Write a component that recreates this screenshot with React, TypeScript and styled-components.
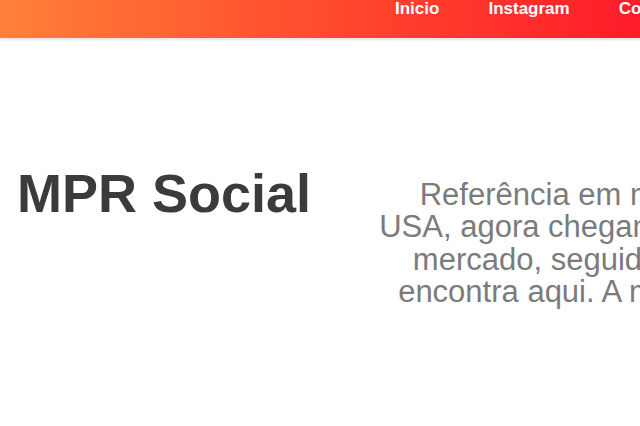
import React from "react";
import styled, { createGlobalStyle } from "styled-components";

const GlobalStyle = createGlobalStyle`
  html, body {
    margin: 0;
    padding: 0;
    overflow: hidden;
    background: #ffffff;
  }
  body {
    font-family: "Liberation Sans", Arial, Helvetica, sans-serif;
  }
`;

const Page = styled.div`
  width: 980px;
  min-height: 426px;
`;

const Header = styled.header`
  height: 38px;
  display: flex;
  align-items: flex-start;
  padding-left: 395px;
  background: linear-gradient(to right, #ff8038 0px, #ff4b2d 320px, #fe1c2a 640px, #f0182e 980px);
  box-shadow: 0 2px 3px rgba(0, 0, 0, 0.12);
  position: relative;
  z-index: 1;
`;

const Nav = styled.nav`
  display: flex;
  gap: 49px;
`;

const NavLink = styled.a`
  color: #ffffff;
  font-weight: bold;
  font-size: 17px;
  line-height: 18px;
  text-decoration: none;
  white-space: nowrap;
`;

const Hero = styled.section`
  display: grid;
  grid-template-columns: 345px 610px;
  align-items: start;
  padding: 124px 0 0 17px;
`;

const Title = styled.h1`
  margin: 0;
  font-size: 54px;
  line-height: 62px;
  font-weight: bold;
  color: #3b3b3b;
  white-space: nowrap;
`;

const Lead = styled.p`
  margin: 17px 0 0;
  font-size: 31px;
  line-height: 32.4px;
  color: #7b7b7b;
  text-align: center;
  white-space: nowrap;
`;

export default function App() {
  return (
    <>
      <GlobalStyle />
      <Page>
        <Header>
          <Nav>
            <NavLink href="#">Inicio</NavLink>
            <NavLink href="#">Instagram</NavLink>
            <NavLink href="#">Contato</NavLink>
          </Nav>
        </Header>
        <Hero>
          <Title>MPR Social</Title>
          <Lead>
            Referência em marketing digital nos
            <br />
            USA, agora chegamos ao Brasil inovando
            <br />
            mercado, seguidores reais e curtidas
            <br />
            encontra aqui. A melhor opção do país.
          </Lead>
        </Hero>
      </Page>
    </>
  );
}
